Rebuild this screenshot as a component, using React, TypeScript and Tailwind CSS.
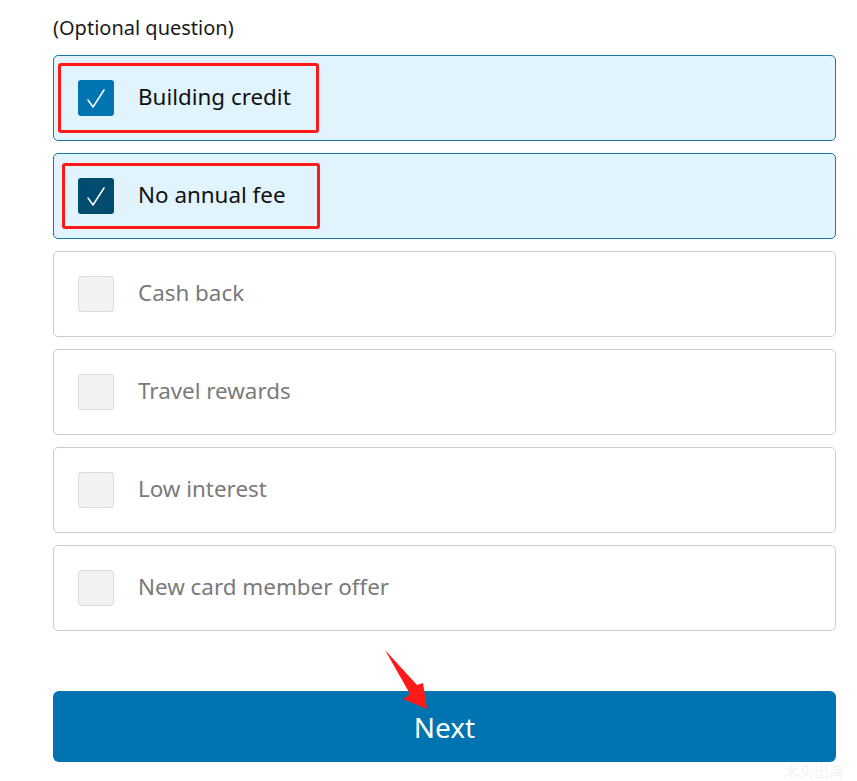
const options = [
  { label: 'Building credit', checked: true, box: 'bg-[#0074b0]' },
  { label: 'No annual fee', checked: true, box: 'bg-[#004b70]' },
  { label: 'Cash back', checked: false, box: '' },
  { label: 'Travel rewards', checked: false, box: '' },
  { label: 'Low interest', checked: false, box: '' },
  { label: 'New card member offer', checked: false, box: '' },
];

function Check() {
  return (
    <svg width="36" height="36" viewBox="0 0 36 36" fill="none">
      <path d="M10 20 L15 27 L26 10" stroke="white" strokeWidth="1.5" strokeLinecap="round" strokeLinejoin="round" />
    </svg>
  );
}

export default function App() {
  return (
    <div className="relative w-[857px] h-[781px] bg-white overflow-hidden" style={{ fontFamily: '"Noto Sans", "Open Sans", sans-serif' }}>
      <div className="pl-[53px] pr-[21px] pt-[14px]">
        <p className="text-[20px] leading-[28px] text-[#1a1a1a] mb-[13px]">(Optional question)</p>
        <div className="flex flex-col gap-[12px]">
          {options.map(o => (
            <div
              key={o.label}
              className={`h-[86px] rounded-[5px] border flex items-center pl-[24px] ${
                o.checked ? 'bg-[#e1f4fd] border-[#1a77ad]' : 'bg-white border-[#cccccc]'
              }`}
            >
              <div
                className={`w-[36px] h-[36px] rounded-[3px] flex items-center justify-center ${
                  o.checked ? o.box : 'bg-[#f2f2f2] border border-[#dcdcdc]'
                }`}
              >
                {o.checked && <Check />}
              </div>
              <span className={`ml-[24px] mb-[2px] text-[22.4px] ${o.checked ? 'text-[#111111]' : 'text-[#7a7a7a]'}`}>{o.label}</span>
            </div>
          ))}
        </div>
        <button className="mt-[60px] w-full h-[71px] rounded-[6px] bg-[#0074b0] text-white text-[28px] flex items-center justify-center">
          Next
        </button>
      </div>

      {/* annotations */}
      <div className="absolute left-[58px] top-[63px] w-[261px] h-[70px] border-[3px] border-[#ff1a1a] rounded-[3px]" />
      <div className="absolute left-[62px] top-[163px] w-[258px] h-[66px] border-[3px] border-[#ff1a1a] rounded-[3px]" />
      <svg className="absolute left-[375px] top-[640px]" width="60" height="80" viewBox="0 0 60 80">
        <path d="M10 10 L42 45 L48 43 L52 69 L28 59 L35 54 Z" fill="#ff1a1a" />
      </svg>
      <span className="absolute left-[784px] top-[760px] text-[15px] text-[#f3f3f3]" style={{ fontFamily: '"Noto Sans CJK SC", sans-serif' }}>木头出海</span>
    </div>
  );
}
